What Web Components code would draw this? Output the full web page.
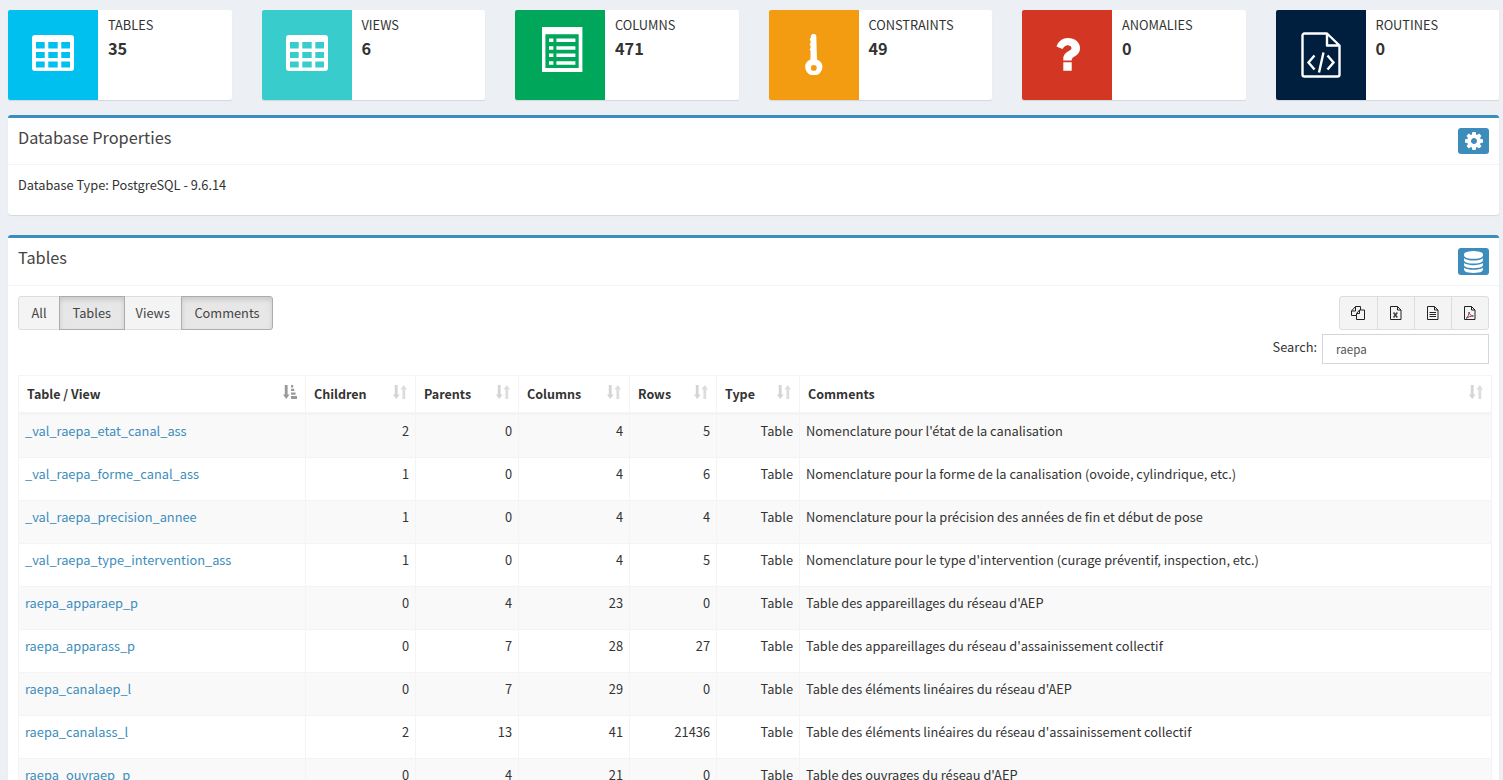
<!DOCTYPE html>
<html lang="fr">
<head>
<meta charset="utf-8">
<title>Tables</title>
<style>
  html, body { margin: 0; height: 780px; overflow: hidden; }
  body {
    background: #ecf0f5;
    color: #333;
    font: 12.8px/20px "Noto Sans CJK SC", "Source Sans Pro", "Noto Sans", sans-serif;
  }
  main { display: block; padding: 10px 4px 0 8px; }
  svg { display: block; }
</style>
</head>
<body>
<main>
  <stat-row>
    <info-box label="Tables" value="35" color="#00c0ef">
      <svg style="margin-bottom:4px" width="42" height="36" viewBox="0 0 42 36"><path fill="#fff" fill-rule="evenodd" d="M3 0h36a3 3 0 0 1 3 3v30a3 3 0 0 1-3 3H3a3 3 0 0 1-3-3V3a3 3 0 0 1 3-3zM4 7v6.500h8.700V7zm12.300 0v6.500h9.400V7zm13 0v6.500H38V7zM4 17v6h8.700v-6zm12.300 0v6h9.400v-6zm13 0v6H38v-6zM4 26.500V32.500h8.700v-6zm12.300 0v6h9.400v-6zm13 0v6H38v-6z"/></svg>
    </info-box>
    <info-box label="Views" value="6" color="#39cccc">
      <svg style="margin-bottom:4px" width="42" height="36" viewBox="0 0 42 36"><path fill="#fff" fill-rule="evenodd" d="M3 0h36a3 3 0 0 1 3 3v30a3 3 0 0 1-3 3H3a3 3 0 0 1-3-3V3a3 3 0 0 1 3-3zM4 7v6.500h8.700V7zm12.300 0v6.500h9.400V7zm13 0v6.500H38V7zM4 17v6h8.700v-6zm12.300 0v6h9.400v-6zm13 0v6H38v-6zM4 26.500V32.500h8.700v-6zm12.300 0v6h9.400v-6zm13 0v6H38v-6z"/></svg>
    </info-box>
    <info-box label="Columns" value="471" color="#00a65a">
      <svg style="margin:0 0 12px 5px" width="40.400" height="45" viewBox="0 0 40.400 45"><path fill="#fff" fill-rule="evenodd" d="M0 0h40.400v45H0zM3.400 7.300V41h33.300V7.300z"/><path fill="#fff" d="M7 11.600h4.400v3.400H7zM14.400 11.600h19v3.400h-19zM7 19.300h4.400v3.400H7zM14.400 19.300h19v3.400h-19zM7 26.600h4.400v3.400H7zM14.400 26.600h19v3.400h-19zM7 34.300h4.400v3.400H7zM14.400 34.300h19v3.400h-19z"/></svg>
    </info-box>
    <info-box label="Constraints" value="49" color="#f39c12">
      <svg style="margin-bottom:2px" width="18" height="41" viewBox="0 0 18 41"><path fill="#fff" fill-rule="evenodd" d="M6 2a2.700 2.700 0 0 1 5.300 0l.7 23.500c3.500 1.300 5.500 4 5.500 7.300a8.700 8.700 0 0 1-17.400 0c0-3.300 2-6 5.300-7.300l.2-8.500-1-1.500 1-1.500v-2l-1-1.500 1-1.500v-2l-1-1.500 1-1.500zM8.800 31a2.900 2.900 0 1 0 0 5.800 2.900 2.900 0 0 0 0-5.800z"/></svg>
    </info-box>
    <info-box label="Anomalies" value="0" color="#d33724">
      <svg style="margin:0 0 1px 2px" width="24" height="33" viewBox="0 0 24 33"><path fill="#fff" d="M.5 8.500C2.500 3 6.500 0 12 0c6.500 0 12 4 12 10 0 5-3 7-5.500 8.500-2 1.200-2.800 2-2.800 4H7.300V21c0-4 2.200-6 4.700-7.500 2.500-1.500 3.500-2 3.500-3.500s-1.700-2.800-3.700-2.800c-2.300 0-3.800 1.300-5.300 3.800zM7.300 24.300h8.400v8.400H7.300z"/></svg>
    </info-box>
    <info-box label="Routines" value="0" color="#001f3f">
      <svg style="margin-bottom:1px" width="40" height="46" viewBox="0 0 40 46" fill="none" stroke="#fff" stroke-width="2.400"><path stroke-linejoin="round" d="M26 1.500H3.500a2 2 0 0 0-2 2v39a2 2 0 0 0 2 2h33a2 2 0 0 0 2-2V13.500zV13.500h12.500"/><path d="M13.500 23.500l-6 7 6 7M26.500 23.500l6 7-6 7M22.500 20.500l-4.500 20"/></svg>
    </info-box>
  </stat-row>

  <db-panel heading="Database Properties" tool-height="26">
    <svg slot="tool" width="18" height="18" viewBox="128 128 1536 1536"><path fill="#fff" d="M1152 896q0-106-75-181t-181-75-181 75-75 181 75 181 181 75 181-75 75-181zm512-109v222q0 12-8 23t-20 13l-185 28q-19 54-39 91 35 50 107 138 10 12 10 25t-9 23q-27 37-99 108t-94 71q-12 0-26-9l-138-108q-44 23-91 38-16 136-29 186-7 28-36 28h-222q-14 0-24.500-8.500t-11.500-21.500l-28-184q-49-16-90-37l-141 107q-10 9-25 9-14 0-25-11-126-114-165-168-7-10-7-23 0-12 8-23 15-21 51-66.500t54-70.500q-27-50-41-99l-183-27q-13-2-21-12.500t-8-23.500v-222q0-12 8-23t19-13l186-28q14-46 39-92-40-57-107-138-10-12-10-24 0-10 9-23 26-36 98.500-107.500t94.500-71.500q13 0 26 10l138 107q44-23 91-38 16-136 29-186 7-28 36-28h222q14 0 24.500 8.500t11.500 21.500l28 184q49 16 90 37l142-107q9-9 24-9 13 0 25 10 129 119 165 170 7 8 7 22 0 12-8 23-15 21-51 66.500t-54 70.500q26 50 41 98l183 28q13 2 21 12.500t8 23.500z"/></svg>
    <div style="padding-bottom:10px">Database Type: PostgreSQL - 9.6.14</div>
  </db-panel>

  <db-panel heading="Tables" tool-height="27">
    <svg slot="tool" width="19" height="22" viewBox="128 0 1536 1792"><path fill="#fff" d="M896 768q237 0 443-43t325-127v170q0 69-103 128t-280 93.500-385 34.500-385-34.500-280-93.500-103-128v-170q119 84 325 127t443 43zm0 768q237 0 443-43t325-127v170q0 69-103 128t-280 93.500-385 34.500-385-34.500-280-93.500-103-128v-170q119 84 325 127t443 43zm0-384q237 0 443-43t325-127v170q0 69-103 128t-280 93.500-385 34.500-385-34.500-280-93.500-103-128v-170q119 84 325 127t443 43zm0-1152q208 0 385 34.500t280 93.500 103 128v128q0 69-103 128t-280 93.500-385 34.500-385-34.500-280-93.500-103-128v-128q0-69 103-128t280-93.500 385-34.500z"/></svg>
    <table-tools></table-tools>
    <tables-grid></tables-grid>
  </db-panel>
</main>

<script>
class StatRow extends HTMLElement {
  connectedCallback() {
    this.attachShadow({ mode: 'open' });
    this.shadowRoot.innerHTML = `
      <style>
        :host { display: grid; grid-template-columns: repeat(6, 1fr); gap: 30px; margin-bottom: 15px; }
      </style>
      <slot></slot>`;
  }
}
customElements.define('stat-row', StatRow);

class InfoBox extends HTMLElement {
  connectedCallback() {
    this.attachShadow({ mode: 'open' });
    this.shadowRoot.innerHTML = `
      <style>
        :host { display: flex; height: 90px; background: #fff; border-radius: 2px; box-shadow: 0 1px 1px rgba(0,0,0,.1); overflow: hidden; }
        .icon { flex: 0 0 90px; display: flex; align-items: center; justify-content: center; background: ${this.getAttribute('color')}; }
        .text { padding: 5px 10px; min-width: 0; }
        .label { display: block; text-transform: uppercase; }
        .value { display: block; font-weight: 700; font-size: 16.300px; line-height: 26px; }
      </style>
      <div class="icon"><slot></slot></div>
      <div class="text">
        <span class="label">${this.getAttribute('label')}</span>
        <span class="value">${this.getAttribute('value')}</span>
      </div>`;
  }
}
customElements.define('info-box', InfoBox);

class DbPanel extends HTMLElement {
  connectedCallback() {
    this.attachShadow({ mode: 'open' });
    this.shadowRoot.innerHTML = `
      <style>
        :host { display: block; background: #fff; border-top: 3px solid #3c8dbc; border-radius: 3px; box-shadow: 0 1px 1px rgba(0,0,0,.1); margin-bottom: 20px; }
        header { display: flex; align-items: flex-start; justify-content: space-between; padding: 10px; border-bottom: 1px solid #f4f4f4; }
        h3 { margin: -1px 0 0; font-size: 16.300px; font-weight: 400; line-height: 20px; color: #444; }
        .tool { display: flex; align-items: center; justify-content: center; width: 31px; height: ${this.getAttribute('tool-height')}px; background: #3c8dbc; border-radius: 3px; }
        .body { padding: 10px; }
      </style>
      <header>
        <h3>${this.getAttribute('heading')}</h3>
        <div class="tool"><slot name="tool"></slot></div>
      </header>
      <div class="body"><slot></slot></div>`;
  }
}
customElements.define('db-panel', DbPanel);

const FILE_OUTLINE = '<path d="M1.500.5h7l3.500 3.500v9.500H1.500zM8.500.5V4H12"/>';
const EXPORT_ICONS = {
  copy: '<path d="M5.500 9.500H.5V5l4-4.500h5V4M4.500.5V5H.5"/><path d="M5.500 13.500V7.500L8.500 4h5v9.500zM8.500 4v3.500h-3"/>',
  excel: FILE_OUTLINE + '<path stroke="#444" stroke-width="1.600" d="M4.500 6.500l3.800 5M8.300 6.500l-3.800 5"/>',
  text: FILE_OUTLINE + '<path d="M3.500 6.500h6.500M3.500 8.500h6.500M3.500 10.500h6.500"/>',
  pdf: FILE_OUTLINE + '<path stroke="#8a3a4a" d="M3 12.500c2-1.500 3-4 3-6.500.5 2.500 2 3.800 4.500 4-2.500 0-5 .8-7.500 2.500z"/>'
};

class TableTools extends HTMLElement {
  connectedCallback() {
    this.attachShadow({ mode: 'open' });
    const filter = [['All', 42], ['Tables', 65.5, 1], ['Views', 58.5], ['Comments', 92, 1]]
      .map(([t, w, on]) => `<button class="${on ? 'on' : ''}" style="width:${w}px">${t}</button>`).join('');
    const exports = Object.keys(EXPORT_ICONS)
      .map(k => `<button class="ico"><svg width="14" height="14" viewBox="0 0 14 14" fill="none" stroke="#222">${EXPORT_ICONS[k]}</svg></button>`).join('');
    this.shadowRoot.innerHTML = `
      <style>
        :host { display: block; }
        .bar { display: flex; justify-content: space-between; }
        .group { display: flex; }
        button { height: 34px; padding: 0; margin: 0 0 0 -1px; font: inherit; color: #444; background: #f4f4f4; border: 1px solid #ddd; border-radius: 0; }
        button:first-child { margin-left: 0; border-radius: 3px 0 0 3px; }
        button:last-child { border-radius: 0 3px 3px 0; }
        button.on { position: relative; background: #e7e7e7; border-color: #adadad; box-shadow: inset 0 3px 5px rgba(0,0,0,.125); }
        button.ico { width: 38px; display: flex; align-items: center; justify-content: center; }
        button.ico:first-child { width: 39.500px; }
        .search { display: flex; justify-content: flex-end; align-items: center; gap: 5px; margin-top: 4px; }
        label { padding-bottom: 4px; }
        input { box-sizing: border-box; width: 167px; height: 30px; padding: 0 13px; font-family: inherit; font-size: 11.600px; color: #555; border: 1px solid #d2d6de; outline: 0; }
      </style>
      <div class="bar">
        <div class="group">${filter}</div>
        <div class="group">${exports}</div>
      </div>
      <div class="search"><label>Search:</label><input value="raepa"></div>`;
  }
}
customElements.define('table-tools', TableTools);

class SortIcon extends HTMLElement {
  connectedCallback() {
    this.attachShadow({ mode: 'open' });
    const active = this.hasAttribute('active');
    this.shadowRoot.innerHTML = `
      <style>:host { display: block; }</style>
      ${active
        ? `<svg width="14" height="14" viewBox="0 0 14 14" fill="#999"><path d="M1.800 0h2.800v9.500h2L3.200 14 0 9.500h1.800zM8 0h2.200v2.400H8zM8 3.700h3.300v2.400H8zM8 7.400h4.600v2.400H8zM8 11.100h6V14H8z"/></svg>`
        : `<svg width="14" height="14" viewBox="0 0 14 14" fill="#ddd"><path fill="#d4d4d4" d="M1.800 0h2.800v9.500h2L3.200 14 0 9.500h1.800z"/><path d="M9.400 14V4.500h-2L10.800 0 14 4.500h-1.800V14z"/></svg>`}`;
  }
}
customElements.define('sort-icon', SortIcon);

const COLUMNS = [
  ['Table / View', 287], ['Children', 110], ['Parents', 103], ['Columns', 111],
  ['Rows', 87], ['Type', 83], ['Comments', 692]
];

const ROWS = [
  ['_val_raepa_etat_canal_ass', 2, 0, 4, 5, "Nomenclature pour l'état de la canalisation"],
  ['_val_raepa_forme_canal_ass', 1, 0, 4, 6, 'Nomenclature pour la forme de la canalisation (ovoide, cylindrique, etc.)'],
  ['_val_raepa_precision_annee', 1, 0, 4, 4, 'Nomenclature pour la précision des années de fin et début de pose'],
  ['_val_raepa_type_intervention_ass', 1, 0, 4, 5, "Nomenclature pour le type d'intervention (curage préventif, inspection, etc.)"],
  ['raepa_apparaep_p', 0, 4, 23, 0, "Table des appareillages du réseau d'AEP"],
  ['raepa_apparass_p', 0, 7, 28, 27, "Table des appareillages du réseau d'assainissement collectif"],
  ['raepa_canalaep_l', 0, 7, 29, 0, "Table des éléments linéaires du réseau d'AEP"],
  ['raepa_canalass_l', 2, 13, 41, 21436, "Table des éléments linéaires du réseau d'assainissement collectif"],
  ['raepa_ouvraep_p', 0, 4, 21, 0, "Table des ouvrages du réseau d'AEP"]
];

class TablesGrid extends HTMLElement {
  connectedCallback() {
    this.attachShadow({ mode: 'open' });
    const cols = COLUMNS.map(c => `<col style="width:${c[1]}px">`).join('');
    const head = COLUMNS.map((c, i) =>
      `<th><div class="th"><span>${c[0]}</span><sort-icon ${i === 0 ? 'active' : ''}></sort-icon></div></th>`).join('');
    const body = ROWS.map(r => `<tr>
        <td><a href="#">${r[0]}</a></td>
        <td class="num">${r[1]}</td><td class="num">${r[2]}</td><td class="num">${r[3]}</td><td class="num">${r[4]}</td>
        <td class="num">Table</td><td>${r[5]}</td>
      </tr>`).join('');
    this.shadowRoot.innerHTML = `
      <style>
        :host { display: block; margin: 11px -2px 0 0; }
        table { table-layout: fixed; width: 1473px; border-collapse: collapse; border: 1px solid #f4f4f4; }
        th { padding: 0 8px; height: 36px; text-align: left; border: 1px solid #f4f4f4; border-bottom-width: 3px; font-weight: 700; font-size: 12.500px; }
        .th { display: flex; justify-content: space-between; align-items: center; }
        td { height: 43px; padding: 0 6px 10px; border: 1px solid #f4f4f4; box-sizing: border-box; }
        tbody tr:first-child td { height: 44px; padding-bottom: 11px; }
        tbody tr:nth-child(odd) { background: #f9f9f9; }
        .num { text-align: right; }
        a { color: #3c8dbc; text-decoration: none; }
      </style>
      <table><colgroup>${cols}</colgroup><thead><tr>${head}</tr></thead><tbody>${body}</tbody></table>`;
  }
}
customElements.define('tables-grid', TablesGrid);
</script>
</body>
</html>
